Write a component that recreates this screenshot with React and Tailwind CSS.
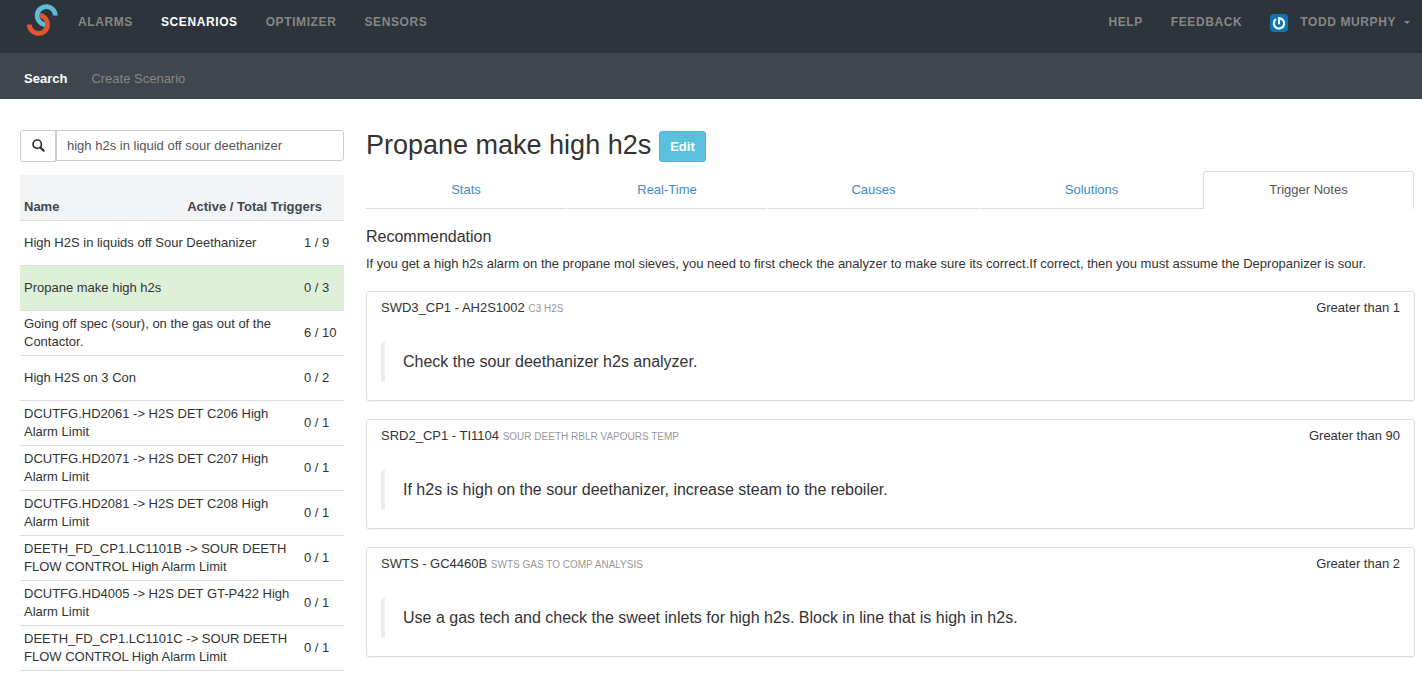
import React from "react";

const navItem = "text-xs leading-5 font-bold tracking-wider whitespace-nowrap";

const primaryLinks = ["ALARMS", "SCENARIOS", "OPTIMIZER", "SENSORS"];

const scenarios = [
  ["High H2S in liquids off Sour Deethanizer", "1 / 9"],
  ["Propane make high h2s", "0 / 3"],
  ["Going off spec (sour), on the gas out of the Contactor.", "6 / 10"],
  ["High H2S on 3 Con", "0 / 2"],
  ["DCUTFG.HD2061 -> H2S DET C206 High Alarm Limit", "0 / 1"],
  ["DCUTFG.HD2071 -> H2S DET C207 High Alarm Limit", "0 / 1"],
  ["DCUTFG.HD2081 -> H2S DET C208 High Alarm Limit", "0 / 1"],
  ["DEETH_FD_CP1.LC1101B -> SOUR DEETH FLOW CONTROL High Alarm Limit", "0 / 1"],
  ["DCUTFG.HD4005 -> H2S DET GT-P422 High Alarm Limit", "0 / 1"],
  ["DEETH_FD_CP1.LC1101C -> SOUR DEETH FLOW CONTROL High Alarm Limit", "0 / 1"],
  ["DEETH_FD_CP1.LC1101A -> SOUR DEETH FLOW CONTROL High Alarm Limit", "0 / 1"],
];

const tabs = ["Stats", "Real-Time", "Causes", "Solutions", "Trigger Notes"];

const notes = [
  ["SWD3_CP1 - AH2S1002", "C3 H2S", "Greater than 1", "Check the sour deethanizer h2s analyzer."],
  ["SRD2_CP1 - TI1104", "SOUR DEETH RBLR VAPOURS TEMP", "Greater than 90", "If h2s is high on the sour deethanizer, increase steam to the reboiler."],
  ["SWTS - GC4460B", "SWTS GAS TO COMP ANALYSIS", "Greater than 2", "Use a gas tech and check the sweet inlets for high h2s. Block in line that is high in h2s."],
];

function Logo() {
  return (
    <svg width="33" height="34" viewBox="0 0 33 34" fill="none" strokeWidth="4.8" aria-hidden="true">
      <path d="M29.4 12.6A9.1 9.1 0 1 0 19.3 21.7" stroke="#5cbdd8" />
      <path d="M3.4 21.4A9.1 9.1 0 1 0 14 12.4" stroke="#e2552f" />
    </svg>
  );
}

function Avatar() {
  return (
    <svg width="18" height="18" viewBox="0 0 18 18" fill="none" aria-hidden="true">
      <rect width="18" height="18" rx="4" fill="#0b75b8" />
      <path d="M9 9.4V4.1A5.2 5.2 0 1 1 5.2 5.7" stroke="#fff" strokeWidth="2.1" strokeLinecap="round" strokeLinejoin="round" />
    </svg>
  );
}

function SearchGlyph() {
  return (
    <svg width="13" height="13" viewBox="0 0 13 13" fill="none" stroke="#333" aria-hidden="true">
      <circle cx="5.2" cy="5.2" r="4.2" strokeWidth="1.7" />
      <path d="M8.4 8.4 11.7 11.7" strokeWidth="2.2" strokeLinecap="round" />
    </svg>
  );
}

function Header() {
  return (
    <header>
      <nav aria-label="Primary" className="flex h-[53px] items-start justify-between bg-[#2d343b] pr-3 pl-[26px] text-[#878787]">
        <div className="flex items-start">
          <a href="#home" aria-label="Home" className="mt-[3px] mr-[19px]">
            <Logo />
          </a>
          <div className="mt-3 flex gap-7">
            {primaryLinks.map((label) => (
              <a key={label} href={"#" + label.toLowerCase()} className={label === "SCENARIOS" ? navItem + " text-white" : navItem}>
                {label}
              </a>
            ))}
          </div>
        </div>
        <div className="mt-3 flex gap-7">
          <a href="#help" className={navItem}>HELP</a>
          <a href="#feedback" className={navItem}>FEEDBACK</a>
          <button type="button" className={navItem + " flex items-start"}>
            <span className="mt-0.5 mr-3"><Avatar /></span>
            TODD MURPHY
            <svg width="6" height="3" viewBox="0 0 6 3" className="mt-[9px] ml-2" aria-hidden="true">
              <path d="M0 0h6L3 3z" fill="#878787" />
            </svg>
          </button>
        </div>
      </nav>
      <nav aria-label="Scenarios" className="flex h-[46px] items-center gap-6 bg-[#3f464d] px-6 pt-1.5">
        <a href="#search" className="font-bold text-white">Search</a>
        <a href="#create" className="text-[#878787]">Create Scenario</a>
      </nav>
    </header>
  );
}

function ScenarioList() {
  return (
    <aside className="w-[324px] shrink-0">
      <form role="search" className="flex items-start" onSubmit={(e) => e.preventDefault()}>
        <button type="submit" aria-label="Search" className="flex h-8 w-9 items-center justify-center rounded-l-[3px] border border-[#ccc] pb-0.5">
          <SearchGlyph />
        </button>
        <input
          type="text"
          aria-label="Scenario search"
          defaultValue="high h2s in liquid off sour deethanizer"
          className="h-[31px] min-w-0 flex-1 rounded-r-[3px] border border-[#ccc] px-2.5 text-[#555] outline-none"
        />
      </form>
      <table className="mt-[13px] w-full table-fixed">
        <colgroup>
          <col />
          <col className="w-[50px]" />
        </colgroup>
        <thead>
          <tr className="h-[45px] border-b border-[#ddd] bg-[#f2f4f6] text-[#3f464d]">
            <th colSpan={2} className="px-1 pb-1 align-bottom">
              <div className="flex justify-between pr-[18px]">
                <span>Name</span>
                <span>Active / Total Triggers</span>
              </div>
            </th>
          </tr>
        </thead>
        <tbody>
          {scenarios.map(([name, count], i) => (
            <tr key={name} className={i === 1 ? "h-[45px] border-b border-[#ddd] bg-[#dff0d8]" : "h-[45px] border-b border-[#ddd]"}>
              <td className="py-1 pr-0 pl-1">{name}</td>
              <td className="pl-2.5 whitespace-nowrap">{count}</td>
            </tr>
          ))}
        </tbody>
      </table>
    </aside>
  );
}

function Details() {
  return (
    <main className="min-w-0 flex-1">
      <div className="flex items-start gap-2 pt-px">
        <h1 className="text-[27px] leading-7">Propane make high h2s</h1>
        <button type="button" className="h-[31px] rounded-[3px] border border-[#46b8da] bg-[#5bc0de] px-2.5 font-bold text-white">Edit</button>
      </div>
      <div role="tablist" className="mt-[9px] grid grid-cols-[201fr_201fr_212fr_223fr_212fr] text-center">
        {tabs.map((label) => {
          const active = label === "Trigger Notes";
          return (
            <button
              key={label}
              type="button"
              role="tab"
              aria-selected={active}
              className={
                active
                  ? "mr-px h-[38px] rounded-t-[3px] border border-b-0 border-[#ddd] pb-px text-[#555]"
                  : "mr-px h-[38px] border-b border-[#ddd] text-[#428bca] nth-[4]:mr-0"
              }
            >
              {label}
            </button>
          );
        })}
      </div>
      <h2 className="mt-[18px] text-base leading-5">Recommendation</h2>
      <p className="mt-2">
        If you get a high h2s alarm on the propane mol sieves, you need to first check the analyzer to make sure its correct.If correct, then you must assume the Depropanizer is sour.
      </p>
      <div className="mt-[18px] flex flex-col gap-[18px]">
        {notes.map(([tag, desc, condition, text]) => (
          <section key={tag} className="rounded-[3px] border border-[#ddd] px-3.5 pt-[7px] pb-[18px] shadow-[0_1px_1px_rgba(0,0,0,0.05)]">
            <div className="flex justify-between">
              <h3>
                {tag} <small className="text-[10px] leading-none text-[#999]">{desc}</small>
              </h3>
              <span>{condition}</span>
            </div>
            <blockquote className="mt-[25px] border-l-4 border-[#eee] py-2.5 pl-[18px] text-base leading-5">{text}</blockquote>
          </section>
        ))}
      </div>
    </main>
  );
}

export default function App() {
  return (
    <div className="min-h-screen bg-white font-['Liberation_Sans',Arial,sans-serif] text-[13px] leading-[18px] text-[#333]">
      <Header />
      <div className="flex gap-[22px] pt-[31px] pr-[7px] pl-5">
        <ScenarioList />
        <Details />
      </div>
    </div>
  );
}
